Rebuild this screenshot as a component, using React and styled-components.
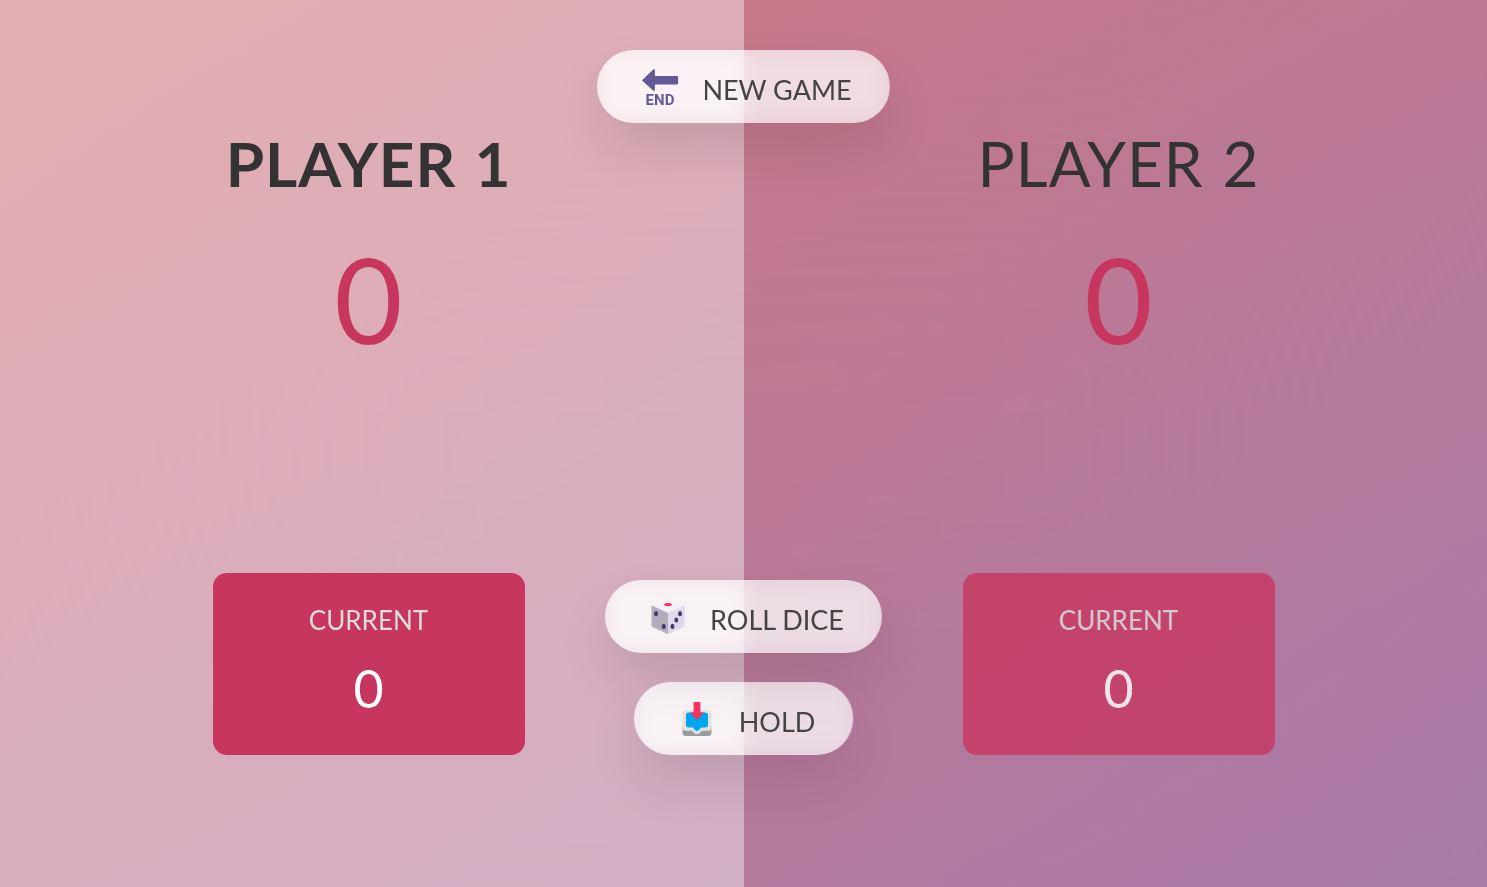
import React, { useState } from 'react';
import styled, { createGlobalStyle } from 'styled-components';

const GlobalStyle = createGlobalStyle`
  * {
    margin: 0;
    padding: 0;
    box-sizing: border-box;
  }

  body {
    min-height: 100vh;
    overflow: hidden;
    font-family: Lato, 'Open Sans', sans-serif;
    font-weight: 400;
    color: #333;
    background-image: linear-gradient(to top left, #7c357a 10%, #b82f3c 90%);
  }
`;

function EndIcon() {
  return (
    <Icon viewBox="0 0 50 42" aria-hidden="true">
      <path
        d="M7.3 14 18 3.8c.9-.8 1.9-.5 1.9.6v5.7h22c.7 0 1.2.5 1.2 1.2v5.9c0 .7-.5 1.2-1.2 1.2h-22v5.4c0 1.2-1 1.5-1.9.7L7.3 14.7a.5.5 0 0 1 0-.7Z"
        fill="#635994"
      />
      <EndText x="25" y="39" textAnchor="middle">END</EndText>
    </Icon>
  );
}

function DiceIcon() {
  return (
    <Icon viewBox="0 1 50 42" aria-hidden="true">
      <path d="M8.7 10.8 23.4 5.2a4.4 4.4 0 0 1 3.2 0l14.7 5.6L25 18.4Z" fill="#f3eef8" />
      <path d="M8.7 10.6 25 18v20.8c-.6 0-1-.1-1.5-.4L10 32.3c-1-.5-1.5-1.2-1.5-2.3V11.5c0-.4 0-.7.2-.9Z" fill="#b4acbc" />
      <path d="M25 18 41.3 10.6c.2.3.3.6.3.9V30c0 1.1-.5 1.8-1.5 2.3l-13.6 6.1c-.5.3-.9.4-1.5.4Z" fill="#e1d8ec" />
      <ellipse cx="25" cy="9.4" rx="3.8" ry="1.5" fill="#f92f2f" />
      <g fill="#433b6b">
        <ellipse cx="13" cy="18.7" rx="2" ry="2.6" />
        <ellipse cx="20.7" cy="31.4" rx="2" ry="2.6" />
        <ellipse cx="37" cy="18.7" rx="2" ry="2.6" />
        <ellipse cx="33.3" cy="25" rx="2" ry="2.6" />
        <ellipse cx="29.5" cy="31.4" rx="2" ry="2.6" />
      </g>
    </Icon>
  );
}

function InboxIcon() {
  return (
    <Icon viewBox="0 1 50 42" aria-hidden="true">
      <path d="M10.6 29h28.8v6.8a3.2 3.2 0 0 1-3.2 3.2H13.8a3.2 3.2 0 0 1-3.2-3.2Z" fill="#9b9b9b" />
      <path
        d="M14 13h22a3.4 3.4 0 0 1 3.4 3.4v14.4a3 3 0 0 1-3 3h-5.5c-1.1 0-1.5.5-2.1 1.3-1.3 1.7-2.4 2.2-3.8 2.2s-2.5-.5-3.8-2.2c-.6-.8-1-1.3-2.1-1.3h-5.5a3 3 0 0 1-3-3V16.4A3.4 3.4 0 0 1 14 13Z"
        fill="#e1e3e5"
      />
      <path
        d="M16.8 15.6h16.4a2.8 2.8 0 0 1 2.8 2.8v9.4a2.6 2.6 0 0 1-2.6 2.6h-3.2c-1.1 0-1.7.5-2.2 1.4-.8 1.4-1.7 2.1-3 2.1s-2.2-.7-3-2.1c-.5-.9-1.1-1.4-2.2-1.4h-3.2a2.6 2.6 0 0 1-2.6-2.6v-9.4a2.8 2.8 0 0 1 2.8-2.8Z"
        fill="#00a6ed"
      />
      <path d="M21.6 5h6.8v10.4h3c.5 0 .6.4.3.7l-6.3 6.3a.6.6 0 0 1-.8 0l-6.3-6.3c-.3-.3-.2-.7.3-.7h3Z" fill="#f8315f" />
    </Icon>
  );
}

function Player({ name, score, current, active }) {
  return (
    <PlayerSection $active={active}>
      <Name $active={active}>{name}</Name>
      <Score>{score}</Score>
      <Current $active={active}>
        <CurrentLabel>Current</CurrentLabel>
        <CurrentScore>{current}</CurrentScore>
      </Current>
    </PlayerSection>
  );
}

function App() {
  const [scores, setScores] = useState([0, 0]);
  const [current, setCurrent] = useState(0);
  const [active, setActive] = useState(0);

  const newGame = () => {
    setScores([0, 0]);
    setCurrent(0);
    setActive(0);
  };

  const rollDice = () => {
    const dice = Math.trunc(Math.random() * 6) + 1;
    if (dice !== 1) {
      setCurrent(current + dice);
    } else {
      setCurrent(0);
      setActive(active === 0 ? 1 : 0);
    }
  };

  const hold = () => {
    setScores(scores.map((s, i) => (i === active ? s + current : s)));
    setCurrent(0);
    setActive(active === 0 ? 1 : 0);
  };

  return (
    <>
      <GlobalStyle />
      <Page>
        <Board>
          {scores.map((score, i) => (
            <Player
              key={i}
              name={`Player ${i + 1}`}
              score={score}
              current={i === active ? current : 0}
              active={i === active}
            />
          ))}
          <Controls>
            <Button type="button" onClick={newGame}>
              <EndIcon />
              <ButtonText>New game</ButtonText>
            </Button>
            <Spacer />
            <Button type="button" onClick={rollDice}>
              <DiceIcon />
              <ButtonText>Roll dice</ButtonText>
            </Button>
            <Button type="button" onClick={hold}>
              <InboxIcon />
              <ButtonText>Hold</ButtonText>
            </Button>
          </Controls>
        </Board>
      </Page>
    </>
  );
}

export default App;

const Page = styled.div`
  display: flex;
  justify-content: center;
  min-height: 100vh;
`;

const Board = styled.main`
  position: relative;
  display: flex;
  flex: 1 0 auto;
  min-width: 1500px;
  background-color: rgba(255, 255, 255, 0.35);
  backdrop-filter: blur(200px);
`;

const PlayerSection = styled.section`
  flex: 1;
  display: flex;
  flex-direction: column;
  align-items: center;
  padding: 125px 135px 132px;
  background-color: ${(props) => (props.$active ? 'rgba(255, 255, 255, 0.4)' : 'transparent')};
`;

const Name = styled.h2`
  margin-bottom: 18px;
  font-size: 62px;
  line-height: 76px;
  font-weight: ${(props) => (props.$active ? 700 : 400)};
  letter-spacing: 1px;
  word-spacing: 2px;
  text-transform: uppercase;
`;

const Score = styled.p`
  margin-bottom: auto;
  font-size: 118px;
  line-height: 160px;
  color: #c7365f;
`;

const Current = styled.div`
  width: 65%;
  padding: 27px 0 31px;
  border-radius: 14px;
  text-align: center;
  color: #fff;
  background-color: #c7365f;
  opacity: ${(props) => (props.$active ? 1 : 0.8)};
`;

const CurrentLabel = styled.p`
  margin-bottom: 12px;
  font-size: 26px;
  line-height: 40px;
  text-transform: uppercase;
  color: #ddd;
`;

const CurrentScore = styled.p`
  font-size: 52px;
  line-height: 72px;
`;

/* sits on top of both players, centered on the split */
const Controls = styled.div`
  position: absolute;
  inset: 0;
  display: flex;
  flex-direction: column;
  align-items: center;
  gap: 29px;
  padding: 50px 0 132px;
  pointer-events: none;
`;

const Spacer = styled.div`
  flex: 1;
`;

const Button = styled.button`
  display: flex;
  align-items: center;
  gap: 17px;
  height: 73px;
  padding: 0 38px;
  border: none;
  border-radius: 750px;
  font-family: inherit;
  font-size: 27px;
  font-weight: 400;
  text-transform: uppercase;
  color: #444;
  background-color: rgba(255, 255, 255, 0.6);
  backdrop-filter: blur(10px);
  box-shadow: 0 26px 52px rgba(0, 0, 0, 0.1);
  cursor: pointer;
  pointer-events: auto;
`;

const ButtonText = styled.span`
  padding-top: 5px;
`;

const Icon = styled.svg`
  width: 50px;
  height: 42px;
`;

const EndText = styled.text`
  font-family: Roboto, sans-serif;
  font-size: 15px;
  font-weight: 700;
  fill: #635994;
`;
